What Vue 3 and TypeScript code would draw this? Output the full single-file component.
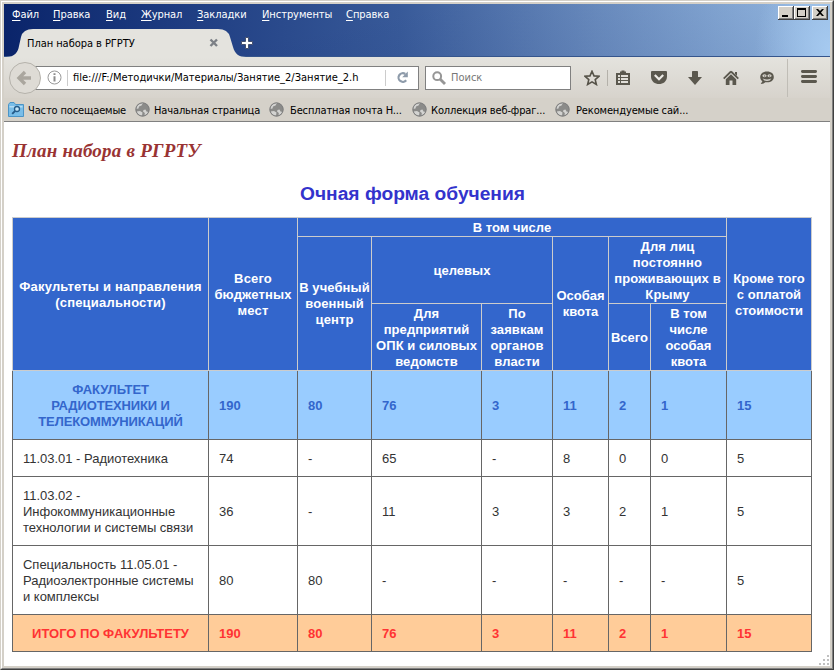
<script setup lang="ts">
interface HeadCell { area: string; lines: string[] }
interface Row { kind: string; title: string[]; values: string[] }

const menu: string[] = ['Файл', 'Правка', 'Вид', 'Журнал', 'Закладки', 'Инструменты', 'Справка']
const bookmarks: string[] = ['Начальная страница', 'Бесплатная почта H...', 'Коллекция веб-фраг...', 'Рекомендуемые сай...']

const head: HeadCell[] = [
  { area: 'faculty', lines: ['Факультеты и направления', '(специальности)'] },
  { area: 'budget', lines: ['Всего', 'бюджетных', 'мест'] },
  { area: 'including', lines: ['В том числе'] },
  { area: 'military', lines: ['В учебный', 'военный', 'центр'] },
  { area: 'target', lines: ['целевых'] },
  { area: 'defence', lines: ['Для', 'предприятий', 'ОПК и силовых', 'ведомств'] },
  { area: 'authority', lines: ['По', 'заявкам', 'органов', 'власти'] },
  { area: 'quota', lines: ['Особая', 'квота'] },
  { area: 'crimea', lines: ['Для лиц', 'постоянно', 'проживающих в', 'Крыму'] },
  { area: 'all', lines: ['Всего'] },
  { area: 'special', lines: ['В том', 'числе', 'особая', 'квота'] },
  { area: 'paid', lines: ['Кроме того', 'с оплатой', 'стоимости'] },
]

const rows: Row[] = [
  { kind: 'group', title: ['ФАКУЛЬТЕТ', 'РАДИОТЕХНИКИ И', 'ТЕЛЕКОММУНИКАЦИЙ'], values: ['190', '80', '76', '3', '11', '2', '1', '15'] },
  { kind: 'plain', title: ['11.03.01 - Радиотехника'], values: ['74', '-', '65', '-', '8', '0', '0', '5'] },
  { kind: 'plain', title: ['11.03.02 -', 'Инфокоммуникационные', 'технологии и системы связи'], values: ['36', '-', '11', '3', '3', '2', '1', '5'] },
  { kind: 'plain', title: ['Специальность 11.05.01 -', 'Радиоэлектронные системы', 'и комплексы'], values: ['80', '80', '-', '-', '-', '-', '-', '5'] },
  { kind: 'total', title: ['ИТОГО ПО ФАКУЛЬТЕТУ'], values: ['190', '80', '76', '3', '11', '2', '1', '15'] },
]
</script>

<template>
  <div class="window">
    <div class="frame">
      <header class="titlebar">
        <nav class="menu">
          <span v-for="m in menu" :key="m"><u>{{ m[0] }}</u>{{ m.slice(1) }}</span>
        </nav>
        <div class="winbtns">
          <svg class="wb" width="16" height="14" viewBox="0 0 16 14"><path d="M4 9h6v2H4z" /></svg>
          <svg class="wb" width="16" height="14" viewBox="0 0 16 14"><path d="M3 2h9v9H3zM4 4v6h7V4z" fill-rule="evenodd" /></svg>
          <svg class="wb last" width="16" height="14" viewBox="0 0 16 14"><path d="M4 3h2l2 2 2-2h2L9 6.500 12 10h-2L8 8l-2 2H4l3-3.500z" /></svg>
        </div>
        <div class="tabs">
          <svg class="tabshape" width="240" height="29" viewBox="0 0 240 29">
            <path d="M0 28C9 28 12 23 13 17L15 8Q17 0 27 0H212Q222 0 224 8L227 18C229 25 233 28 240 28V29H0Z" fill="#e4e3de" />
            <path d="M204.500 10.500l6.500 6.500M211 10.500l-6.500 6.500" stroke="#7c8086" stroke-width="2.400" />
          </svg>
          <span class="tabtitle">План набора в РГРТУ</span>
          <svg class="plus" width="14" height="14" viewBox="0 0 14 14"><path d="M5.500 1.500h3v4h4v3h-4v4h-3v-4h-4v-3h4z" fill="#fff" stroke="#45506f" stroke-width="1" /></svg>
        </div>
      </header>

      <div class="navbar">
        <svg class="back" width="34" height="34" viewBox="0 0 34 34">
          <circle cx="17" cy="17" r="15.500" fill="#dedbd5" stroke="#b5b2ab" />
          <path d="M11 17H23M17 11L11 17l6 6" fill="none" stroke="#aaa69e" stroke-width="3.400" />
        </svg>
        <div class="url">
          <svg class="info" width="15" height="15" viewBox="0 0 15 15"><circle cx="7.500" cy="7.500" r="6.500" fill="none" stroke="#999" /><path d="M6.500 3.300h2v1.700h-2zM6.500 6.200h2v5.300h-2z" fill="#8c8c8c" /></svg>
          <i class="sep"></i>
          <span class="address">file:///F:/Методички/Материалы/Занятие_2/Занятие_2.h</span>
          <i class="sep"></i>
          <svg class="reload" width="13" height="13" viewBox="0 0 13 13"><path d="M10.200 9.200A4.300 4.300 0 1 1 9.300 3" fill="none" stroke="#8e9baa" stroke-width="2.200" /><path d="M11.800.6V6.300H6.200z" fill="#8e9baa" /></svg>
        </div>
        <div class="search">
          <svg width="14" height="14" viewBox="0 0 14 14"><circle cx="5.200" cy="5.200" r="3.900" fill="none" stroke="#969696" stroke-width="2" /><path d="M8 8l5 5" stroke="#969696" stroke-width="2.800" /></svg>
          <span>Поиск</span>
        </div>
        <div class="tools">
          <svg width="16" height="16" viewBox="0 0 16 16"><path d="M8 1.300l2 4.600 5 .4-3.800 3.300 1.200 4.900L8 11.900l-4.400 2.600 1.200-4.900L1 6.300l5-.4z" fill="none" stroke="#555248" stroke-width="1.600" /></svg>
          <i class="toolsep"></i>
          <svg width="16" height="16" viewBox="0 0 16 16"><path d="M1 3h4V1.500h1.500V.5h3v1H11V3h4v12H1z" fill="#5b584e" /><path d="M3 5h2v2H3zm3 0h7v2H6zM3 8h2v2H3zm3 0h7v2H6zm-3 3h2v2H3zm3 0h7v2H6z" fill="#e1dfd9" /></svg>
          <svg width="16" height="16" viewBox="0 0 16 16"><path d="M0 2q0-1 1-1h14q1 0 1 1v4.500c0 10-16 10-16 0z" fill="#5b584e" /><path d="M3.800 5L8 9.200 12.200 5" fill="none" stroke="#eeece7" stroke-width="2.200" /></svg>
          <svg width="16" height="16" viewBox="0 0 16 16"><path d="M5 1.500Q5 1 6 1h4q1 0 1 .5V7h4l-7 8-7-8h4z" fill="#5b584e" /></svg>
          <svg width="16" height="16" viewBox="0 0 16 16"><path d="M8 1.500l7.300 7.200M8 1.500L.7 8.700" fill="none" stroke="#5b584e" stroke-width="1.800" /><path d="M2.800 9.300L8 4.300l5.200 5V15H9.500v-4.500h-3V15H2.800z" fill="#5b584e" /><path d="M12 2h2v4l-2-2z" fill="#5b584e" /></svg>
          <svg width="16" height="16" viewBox="0 0 16 16"><path d="M8 1.500c-4.300 0-6.800 2.300-6.800 5.500 0 1.900.8 3.200 2.200 4.200L1.700 14c2.200 0 3.600-.8 4.600-1.800 5 .8 8.500-1.500 8.500-5.200C14.800 3.800 12.300 1.500 8 1.500z" fill="#5b584e" /><path d="M3.500 5.200q2-1.800 4 0v1q-2 2-4 0zM8.500 5.200q2-1.800 4 0v1q-2 2-4 0z" fill="#d8d5ce" /><path d="M5 5.500h1.200v1H5zM10 5.500h1.200v1H10z" fill="#5b584e" /><path d="M3.700 8.500q4.300 1.800 8.600 0-1 2.500-4.300 2.500T3.700 8.500z" fill="#d8d5ce" /></svg>
          <i class="menusep"></i>
          <svg class="burger" width="17" height="15" viewBox="0 0 17 15"><g fill="#5b584e"><rect width="16" height="3" y="0" rx="1.400" /><rect width="16" height="3" y="5" rx="1.400" /><rect width="16" height="3" y="10" rx="1.400" /></g></svg>
        </div>
      </div>

      <div class="bookmarks">
        <span class="bm">
          <svg width="16" height="15" viewBox="0 0 16 15"><path d="M.5 2.500L2 .5h4l1.500 2h8v12H.5z" fill="#79bde8" stroke="#4b94c6" /><path d="M1.500 4h13v1.500h-13z" fill="#b6dcf3" /><circle cx="9" cy="7" r="2.500" fill="#c7e6f7" stroke="#245b89" stroke-width="1.300" /><path d="M7.200 8.800l-3 3" stroke="#245b89" stroke-width="1.900" /></svg>
          <span>Часто посещаемые</span>
        </span>
        <span v-for="b in bookmarks" :key="b" class="bm">
          <svg width="15" height="15" viewBox="0 0 15 15"><circle cx="7.500" cy="7.500" r="7" fill="#8b8b89" /><path d="M2.500 3Q5 .8 8 1L6.500 3.500 4 4.500 3.500 6.500 1.200 7Q1.200 4.500 2.500 3zM1.500 9.500L5 9l2.500 1.500L7 13.800Q3 13.500 1.500 9.500zM8.500 8l2-.5 1 2 2 .5Q12.500 13 9.500 13.500L9.800 11 8 9.500z" fill="#d3d3d1" /><circle cx="7.500" cy="7.500" r="6.600" fill="none" stroke="#808080" /></svg>
          <span>{{ b }}</span>
        </span>
      </div>

      <main class="page">
        <h1>План набора в РГРТУ</h1>
        <h2>Очная форма обучения</h2>
        <section class="plan">
          <div class="head">
            <div v-for="c in head" :key="c.area" class="hcell" :class="c.area">
              <span v-for="l in c.lines" :key="l">{{ l }}</span>
            </div>
          </div>
          <div v-for="(r, i) in rows" :key="i" class="row" :class="[r.kind, { tall: r.title.length > 1 }]">
            <div class="cell name"><span v-for="l in r.title" :key="l">{{ l }}</span></div>
            <div v-for="(v, j) in r.values" :key="j" class="cell"><span>{{ v }}</span></div>
          </div>
        </section>
        <svg class="grip" width="12" height="12" viewBox="0 0 12 12"><path d="M9 1h2v2H9zM5 5h2v2H5zm4 0h2v2H9zM1 9h2v2H1zm4 0h2v2H5zm4 0h2v2H9z" fill="#c0c0c0" /></svg>
      </main>
    </div>
  </div>
</template>

<style>
body { margin: 0; overflow: hidden; }
</style>

<style scoped>
.window {
  box-sizing: border-box; width: 834px; height: 670px; background: #d4d0c8;
  border-style: solid; border-width: 1px; border-color: #d4d0c8 #404040 #404040 #d4d0c8;
  font: 11px/14px "DejaVu Sans Condensed", "DejaVu Sans", sans-serif; color: #000;
}
.frame {
  box-sizing: border-box; width: 832px; height: 668px; padding: 2px;
  border-style: solid; border-width: 1px; border-color: #fff #808080 #808080 #fff;
  display: flex; flex-direction: column;
}
svg { display: block; flex: none; }
.titlebar {
  position: relative; height: 53px; flex: none;
  background: radial-gradient(ellipse 75px 100px at 100% 85%, #a6caf0 0, rgba(166, 202, 240, 0) 100%), linear-gradient(168deg, transparent 40%, rgba(10, 36, 106, .12)), linear-gradient(90deg, #0a246a, #1d3b80 20%, #385a99 48%, #6b8dbf 72%, #a0c4ea);
  box-shadow: inset 0 -1px #35558c;
}
.menu { display: grid; grid-template-columns: 41px 53px 35px 56px 65px 84px 60px; padding: 4px 0 0 8px; color: #fff; letter-spacing: -.05px; }
.menu span { white-space: nowrap; }
.menu u { text-underline-offset: 2px; }
.winbtns { position: absolute; right: 2px; top: 2px; display: flex; }
.wb { box-sizing: border-box; background: #d4d0c8; box-shadow: inset -1px -1px #404040, inset 1px 1px #fff, inset -2px -2px #808080; }
.wb.last { margin-left: 2px; }
.tabs { position: absolute; left: 2px; top: 25px; display: flex; }
.tabtitle { position: absolute; left: 21px; top: 8px; white-space: nowrap; letter-spacing: -.05px; }
.plus { margin: 7px 0 0 -6px; }
.navbar {
  display: flex; align-items: center; height: 41px; flex: none; background: linear-gradient(#e4e3de, #d7d3cc);
}
.back { margin-left: 4px; position: relative; }
.url {
  box-sizing: border-box; display: flex; align-items: center; width: 385px; height: 24px; margin-left: -8px;
  background: #fff; border: 1px solid #808080; border-left: 0; padding-left: 13px;
}
.sep { width: 1px; height: 16px; background: #ccc; flex: none; }
.info + .sep { margin: 0 5px 0 5px; }
.address { width: 312px; white-space: nowrap; padding-top: 1px; }
.reload { margin-left: 10px; }
.search {
  box-sizing: border-box; display: flex; align-items: center; gap: 5px; width: 146px; height: 24px; margin-left: 6px;
  padding-left: 6px; background: #fff; border: 1px solid #808080; color: #777;
}
.search span { padding-top: 1px; }
.tools { display: flex; align-items: center; margin-left: 13px; align-self: stretch; }
.toolsep { width: 1px; height: 16px; background: #b4b1aa; margin: 0 7px; }
.tools svg + svg { margin-left: 20px; }
.menusep { width: 1px; height: 38px; background: #c0bdb6; margin: 0 13px 0 12px; }
.bookmarks {
  display: flex; box-sizing: border-box; height: 24px; flex: none; padding: 4px 0 0 4px; background: #d5d1c9; border-bottom: 1px solid #808080;
}
.bm { display: flex; gap: 5px; height: 15px; width: 127px; white-space: nowrap; letter-spacing: -.13px; }
.bm span { padding-top: 2px; margin-left: -1px; }
.bm:nth-child(2) { width: 134px; }
.bm:nth-child(3), .bm:nth-child(4) { width: 143px; }
.bm:nth-child(3) span, .bm:nth-child(5) span { margin-left: 1px; }
.page { flex: 1; background: #fff; padding: 18px 0 0 8px; position: relative; font-family: "Liberation Sans", Arial, sans-serif; font-size: 13px; line-height: 16px; }
h1 { margin: 0; font: italic bold 19px/22px "Liberation Serif", serif; color: #993333; letter-spacing: .22px; }
h2 { margin: 20px 0 0; width: 801px; text-align: center; font: bold 19.200px/24px "Liberation Sans", sans-serif; color: #3333cc; }
.plan { width: 800px; margin-top: 11px; }
.head, .row { display: grid; grid-template-columns: 197px 89px 74px 110px 71px 56px 42px 76px 85px; }
.head {
  grid-template-rows: 19px 67px 67px; border-top: 1px solid #ccc; background: #3366cc; color: #fff; font-weight: bold;
  grid-template-areas:
    "faculty budget including including including including including including paid"
    "faculty budget military target target quota crimea crimea paid"
    "faculty budget military defence authority quota all special paid";
}
.hcell { display: flex; flex-direction: column; align-items: center; justify-content: center; white-space: nowrap; padding-top: 1px; border: 0 solid #ccc; border-width: 0 1px 1px 0; }
.faculty { grid-area: faculty; border-left-width: 1px; letter-spacing: .2px; }
.budget { grid-area: budget; letter-spacing: .15px; }
.including { grid-area: including; }
.military { grid-area: military; letter-spacing: .1px; }
.target { grid-area: target; }
.defence { grid-area: defence; letter-spacing: .05px; }
.authority { grid-area: authority; letter-spacing: .1px; }
.quota { grid-area: quota; }
.crimea { grid-area: crimea; letter-spacing: .15px; }
.all { grid-area: all; }
.special { grid-area: special; }
.paid { grid-area: paid; }
.row { height: 37px; color: #333; }
.row.tall { height: 69px; }
.cell { display: flex; flex-direction: column; justify-content: center; padding: 1px 0 0 10px; border: 0 solid #666; border-width: 0 1px 1px 0; white-space: nowrap; }
.name { border-left-width: 1px; }
.plain .name { letter-spacing: -.02px; }
.group, .total { font-weight: bold; }
.group { background: #99ccff; color: #3366cc; }
.total { background: #ffcc99; color: #ff3333; }
.group .name, .total .name { align-items: center; padding-left: 0; }
.group .name { letter-spacing: -.13px; }
.grip { position: absolute; right: 0; bottom: 0; }
</style>
